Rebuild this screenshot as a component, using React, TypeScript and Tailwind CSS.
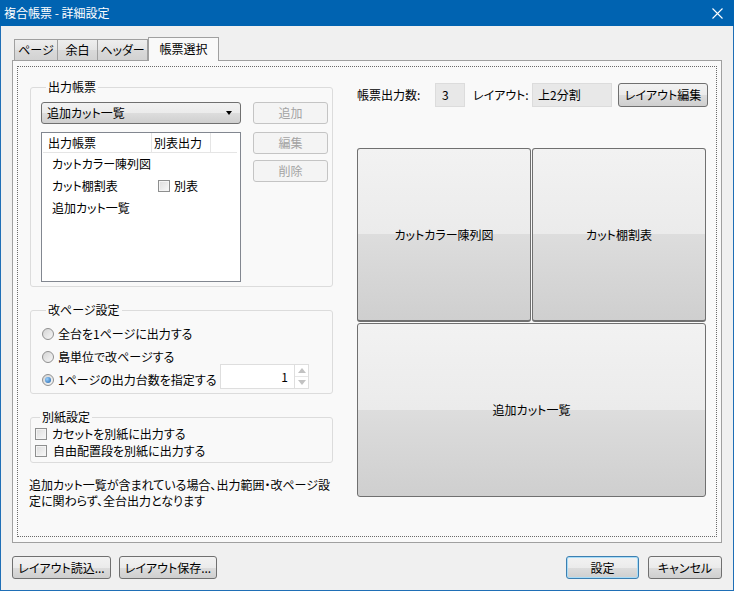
import React from 'react';

const FONT = "[font-family:'Noto_Sans_CJK_JP','Liberation_Sans',sans-serif] [font-feature-settings:'palt']";
const AERO = 'bg-[linear-gradient(to_bottom,#f2f2f2_0%,#ebebeb_50%,#dddddd_50%,#cfcfcf_100%)]';

function AeroButton({ children, className = '', focused = false }: { children: React.ReactNode; className?: string; focused?: boolean }) {
  return (
    <button
      className={`flex items-center justify-center rounded-[3px] border text-[12px] leading-[16px] text-black ${AERO} ${
        focused ? 'border-[#3c7fb1] shadow-[inset_0_0_0_1px_#a8dcf7]' : 'border-[#707070]'
      } ${className}`}
    >
      {children}
    </button>
  );
}

function DisabledButton({ children }: { children: React.ReactNode }) {
  return (
    <button className="flex h-[22px] w-[75px] items-center justify-center rounded-[3px] border border-[#c4c4c4] bg-[#f4f4f4] text-[12px] leading-[16px] text-[#a3a3a3]">
      {children}
    </button>
  );
}

function CheckBox() {
  return (
    <span className="box-border block h-[12px] w-[12px] shrink-0 border border-[#8e8f8f] bg-[linear-gradient(135deg,#dcdcdc,#f8f8f8)] shadow-[inset_0_0_0_1px_#f4f4f4]" />
  );
}

function Radio({ checked = false }: { checked?: boolean }) {
  return (
    <span className="flex h-[12px] w-[12px] shrink-0 items-center justify-center rounded-full border border-[#8f8f8f] bg-[linear-gradient(135deg,#d4d4d4,#f7f7f7)]">
      {checked && <span className="block h-[6px] w-[6px] rounded-full bg-[radial-gradient(circle_at_35%_35%,#9cd2ff,#1b5fa8)]" />}
    </span>
  );
}

function Legend({ children, className = '' }: { children: React.ReactNode; className?: string }) {
  return <legend className={`px-[2px] text-[12px] leading-[16px] ${className}`}>{children}</legend>;
}

export default function App() {
  return (
    <div className={`flex h-[591px] w-[734px] flex-col bg-[#f0f0f0] text-black ${FONT}`}>
      {/* title bar */}
      <div className="flex h-[26px] shrink-0 items-center justify-between bg-[#0063b1] pl-[4px] pr-[11px] text-white">
        <span className="text-[12px] leading-[16px]">複合帳票 - 詳細設定</span>
        <svg width="11" height="11" viewBox="0 0 11 11" className="mt-[1px]">
          <path d="M0.5 0.5 L10.5 10.5 M10.5 0.5 L0.5 10.5" stroke="#ffffff" strokeWidth="1.1" />
        </svg>
      </div>

      <div className="flex flex-1 flex-col border-x border-b border-[#1f6fb6] px-[11px] pt-[11px]">
        {/* tabs */}
        <div className="flex h-[23px] items-end pl-[2px]">
          <div className="flex h-[21px] w-[44px] items-center justify-center border border-b-0 border-[#a0a0a0] bg-[linear-gradient(to_bottom,#eeeeee,#e4e4e4_50%,#dadada_50%,#d2d2d2)] text-[12px] leading-[16px]">ページ</div>
          <div className="flex h-[21px] w-[40px] items-center justify-center border border-b-0 border-l-0 border-[#a0a0a0] bg-[linear-gradient(to_bottom,#eeeeee,#e4e4e4_50%,#dadada_50%,#d2d2d2)] text-[12px] leading-[16px]">余白</div>
          <div className="flex h-[21px] w-[50px] items-center justify-center border border-b-0 border-l-0 border-[#a0a0a0] bg-[linear-gradient(to_bottom,#eeeeee,#e4e4e4_50%,#dadada_50%,#d2d2d2)] text-[12px] leading-[16px]">ヘッダー</div>
          <div className="relative z-10 -mb-px flex h-[24px] w-[71px] items-center justify-center border border-b-0 border-[#a0a0a0] bg-[#f9f9f9] pb-[1px] text-[12px] leading-[16px]">帳票選択</div>
        </div>

        {/* tab panel */}
        <div className="flex h-[483px] w-[710px] border border-[#a0a0a0] bg-[#f9f9f9] px-[4px] pb-[5px] pt-[5px]">
          <div className="flex flex-1 border border-dotted border-[#6a6a6a]">
            {/* left column */}
            <div className="ml-[12px] mt-[12px] flex w-[303px] flex-col">
              <fieldset className="rounded-[3px] border border-[#dcdcdc] pb-[4px] pl-[10px] pr-[4px] pt-[7px]">
                <Legend className="ml-[5px]">出力帳票</Legend>
                <div className="flex gap-[12px]">
                  <div className="flex w-[200px] flex-col gap-[8px]">
                    <div className={`flex h-[22px] items-center justify-between rounded-[3px] border border-[#707070] pl-[5px] pr-[8px] text-[12px] leading-[16px] ${AERO}`}>
                      <span>追加カット一覧</span>
                      <svg width="6" height="4" viewBox="0 0 6 4">
                        <path d="M0 0 L6 0 L3 4 Z" fill="#000" />
                      </svg>
                    </div>
                    <div className="flex h-[150px] flex-col border border-[#828790] bg-white text-[12px] leading-[16px]">
                      <div className="ml-px mr-[3px] flex h-[20px] border-b border-[#e5e5e5]">
                        <div className="flex w-[109px] items-center border-r border-[#e5e5e5] pl-[5px]">出力帳票</div>
                        <div className="flex w-[59px] items-center border-r border-[#e5e5e5] pl-[2px]">別表出力</div>
                      </div>
                      <div className="flex h-[22px] items-center pl-[10px]">カットカラー陳列図</div>
                      <div className="flex h-[22px] items-center pl-[10px]">
                        <span className="w-[106px]">カット棚割表</span>
                        <CheckBox />
                        <span className="ml-[4px]">別表</span>
                      </div>
                      <div className="flex h-[22px] items-center pl-[10px]">追加カット一覧</div>
                    </div>
                  </div>
                  <div className="flex flex-col">
                    <DisabledButton>追加</DisabledButton>
                    <div className="mt-[8px]">
                      <DisabledButton>編集</DisabledButton>
                    </div>
                    <div className="mt-[6px]">
                      <DisabledButton>削除</DisabledButton>
                    </div>
                  </div>
                </div>
              </fieldset>

              <fieldset className="mt-[15px] rounded-[3px] border border-[#dcdcdc] pb-[1px] pl-[11px] pt-[4px] text-[12px] leading-[16px]">
                <Legend className="ml-[4px]">改ページ設定</Legend>
                <div className="flex h-[23px] items-center gap-[4px]">
                  <Radio />
                  <span>全台を1ページに出力する</span>
                </div>
                <div className="flex h-[23px] items-center gap-[4px]">
                  <Radio />
                  <span>島単位で改ページする</span>
                </div>
                <div className="flex h-[24px]">
                  <div className="flex w-[178px] items-center gap-[4px]">
                    <Radio checked />
                    <span className="whitespace-nowrap">1ページの出力台数を指定する</span>
                  </div>
                  <div className="-mt-[4px] flex h-[25px] w-[89px] border border-[#dedede] bg-white">
                    <div className="flex flex-1 items-center justify-end pr-[6px]">1</div>
                    <div className="flex w-[14px] flex-col border-l border-[#dedede]">
                      <div className="flex flex-1 items-center justify-center">
                        <svg width="8" height="5" viewBox="0 0 8 5">
                          <path d="M0 5 L4 0 L8 5 Z" fill="#c2c2c2" />
                        </svg>
                      </div>
                      <div className="flex flex-1 items-center justify-center border-t border-[#e6e6e6]">
                        <svg width="8" height="5" viewBox="0 0 8 5">
                          <path d="M0 0 L8 0 L4 5 Z" fill="#c2c2c2" />
                        </svg>
                      </div>
                    </div>
                  </div>
                </div>
              </fieldset>

              <fieldset className="mt-[15px] rounded-[3px] border border-[#dcdcdc] pb-[3px] pl-[4px] text-[12px] leading-[16px]">
                <Legend className="ml-[5px]">別紙設定</Legend>
                <div className="flex h-[17px] items-center gap-[5px]">
                  <CheckBox />
                  <span>カセットを別紙に出力する</span>
                </div>
                <div className="flex h-[17px] items-center gap-[6px]">
                  <CheckBox />
                  <span>自由配置段を別紙に出力する</span>
                </div>
              </fieldset>

              <div className="-ml-px mt-[14px] flex flex-col text-[12px] leading-[16px]">
                <span className="whitespace-nowrap">追加カット一覧が含まれている場合、出力範囲・改ページ設</span>
                <span className="whitespace-nowrap">定に関わらず、全台出力となります</span>
              </div>
            </div>

            {/* right column */}
            <div className="ml-[24px] mt-[16px] flex flex-col">
              <div className="flex h-[24px] items-center text-[12px] leading-[16px]">
                <span className="w-[78px] whitespace-nowrap">帳票出力数:</span>
                <div className="flex h-[24px] w-[30px] items-center border border-[#dcdcdc] bg-[#e8e8e8] pl-[6px]">3</div>
                <span className="ml-[8px] w-[59px] whitespace-nowrap">レイアウト:</span>
                <div className="flex h-[24px] w-[80px] items-center border border-[#dcdcdc] bg-[#e8e8e8] pl-[5px]">上2分割</div>
                <AeroButton className="ml-[6px] h-[24px] w-[90px]">レイアウト編集</AeroButton>
              </div>

              <div className="mt-[41px] grid grid-cols-[174px_174px] grid-rows-[174px_174px] gap-[1px]">
                <div className={`flex items-center justify-center rounded-[3px] border border-b-2 border-[#707070] text-[12px] leading-[16px] ${AERO}`}>カットカラー陳列図</div>
                <div className={`flex items-center justify-center rounded-[3px] border border-b-2 border-[#707070] text-[12px] leading-[16px] ${AERO}`}>カット棚割表</div>
                <div className={`col-span-2 flex items-center justify-center rounded-[3px] border border-[#707070] text-[12px] leading-[16px] ${AERO}`}>追加カット一覧</div>
              </div>
            </div>
          </div>
        </div>

        {/* bottom buttons */}
        <div className="mt-[13px] flex items-center">
          <AeroButton className="h-[23px] w-[99px]">レイアウト読込...</AeroButton>
          <AeroButton className="ml-[8px] h-[23px] w-[98px]">レイアウト保存...</AeroButton>
          <div className="flex-1" />
          <AeroButton focused className="h-[23px] w-[73px]">設定</AeroButton>
          <AeroButton className="ml-[9px] h-[23px] w-[74px]">キャンセル</AeroButton>
        </div>
      </div>
    </div>
  );
}
